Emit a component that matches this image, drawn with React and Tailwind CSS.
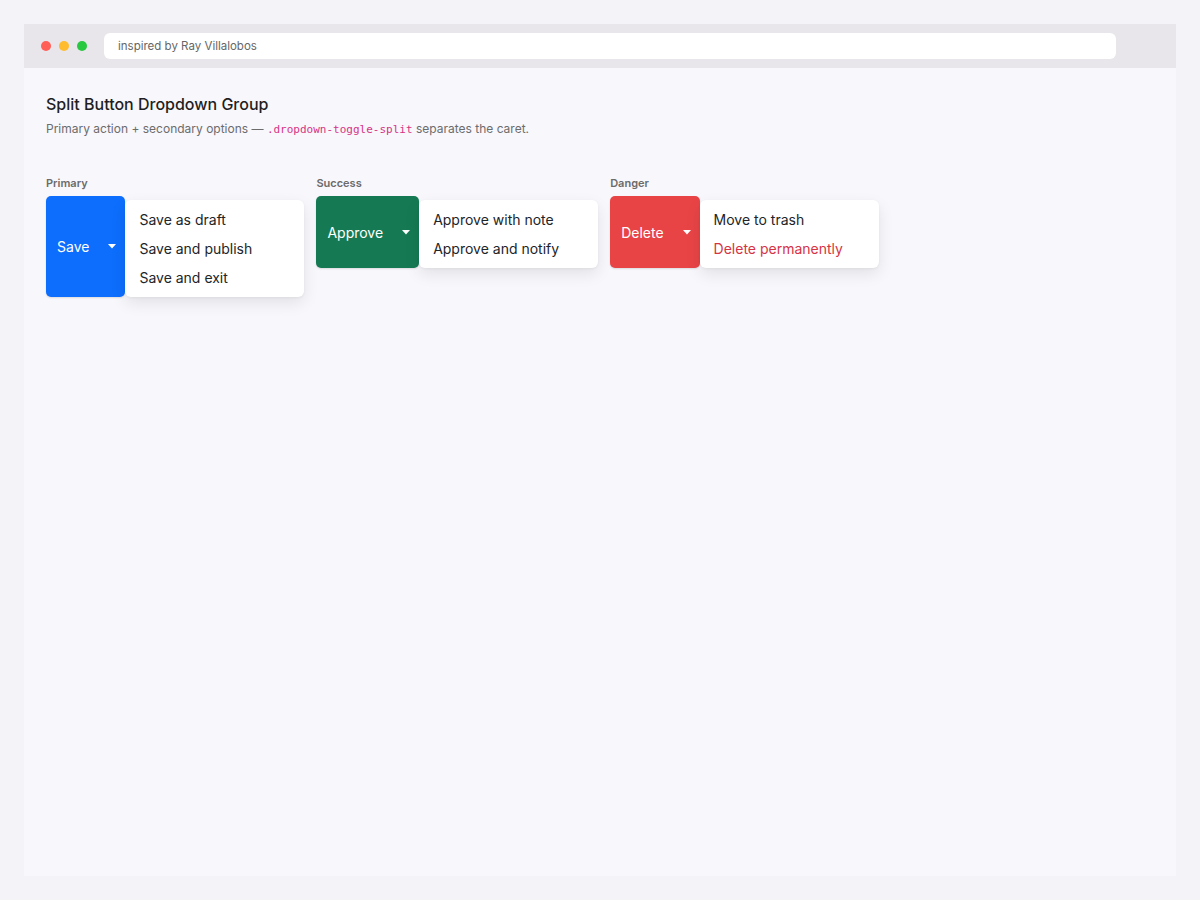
import React from "react";

function Caret() {
  return (
    <svg width="8" height="5" viewBox="0 0 8 5" className="block">
      <path d="M0 0 L8 0 L4 4.5 Z" fill="white" />
    </svg>
  );
}

function Group({ label, text, color, items }) {
  return (
    <div className="flex flex-col">
      <div className="text-[11px] font-semibold text-[#6b6b6b] leading-[14px] mb-[6px]">{label}</div>
      <div className="flex items-stretch">
        <div
          className={`flex items-center rounded-[5px] shadow-[0_1px_2px_rgba(0,0,0,0.12)] ${color}`}
        >
          <span className="pl-[11px] pr-[19px] text-[14px] text-white">{text}</span>
          <span className="pr-[9px]"><Caret /></span>
        </div>
        <div className="mt-1 w-[179px] rounded-[6px] bg-white py-[5px] shadow-[0_6px_16px_rgba(0,0,0,0.09),0_1px_3px_rgba(0,0,0,0.05)]">
          {items.map((it) => (
            <div
              key={it.t}
              className={`h-[29px] px-[14px] flex items-center text-[14px] ${it.danger ? "text-[#d63344]" : "text-[#212529]"}`}
            >
              {it.t}
            </div>
          ))}
        </div>
      </div>
    </div>
  );
}

export default function App() {
  return (
    <div className="min-h-[900px] bg-[#f4f3f8] p-6 font-['Inter',sans-serif]">
      <div className="h-[852px] bg-[#f8f7fc] flex flex-col">
        <div className="h-11 bg-[#e8e6ea] flex items-center pl-[17px] pr-[60px]">
          <div className="flex gap-2">
            <span className="w-[10px] h-[10px] rounded-full bg-[#ff5f57]" />
            <span className="w-[10px] h-[10px] rounded-full bg-[#febc2e]" />
            <span className="w-[10px] h-[10px] rounded-full bg-[#28c840]" />
          </div>
          <div className="ml-[17px] flex-1 h-[26px] bg-white rounded-[6px] flex items-center pl-[14px] pt-[1px] text-[11.5px] text-[#666]">
            inspired by Ray Villalobos
          </div>
        </div>
        <div className="px-[22px] pt-[26px]">
          <h1 className="text-[16px] text-[#1f1f1f] font-medium leading-[20px]">Split Button Dropdown Group</h1>
          <p className="mt-[5px] text-[12px] text-[#6c6c6c] leading-[20px]">
            Primary action + secondary options —{" "}
            <code className="font-['DejaVu_Sans_Mono',monospace] text-[11px] text-[#d63384]">.dropdown-toggle-split</code>{" "}
            separates the caret.
          </p>
          <div className="mt-[36px] flex gap-3 items-start">
            <Group
              label="Primary"
              text="Save"
              color="bg-[#0d6efd]"
              items={[{ t: "Save as draft" }, { t: "Save and publish" }, { t: "Save and exit" }]}
            />
            <Group
              label="Success"
              text="Approve"
              color="bg-[#157a54]"
              items={[{ t: "Approve with note" }, { t: "Approve and notify" }]}
            />
            <Group
              label="Danger"
              text="Delete"
              color="bg-[#e84446]"
              items={[{ t: "Move to trash" }, { t: "Delete permanently", danger: true }]}
            />
          </div>
        </div>
      </div>
    </div>
  );
}
